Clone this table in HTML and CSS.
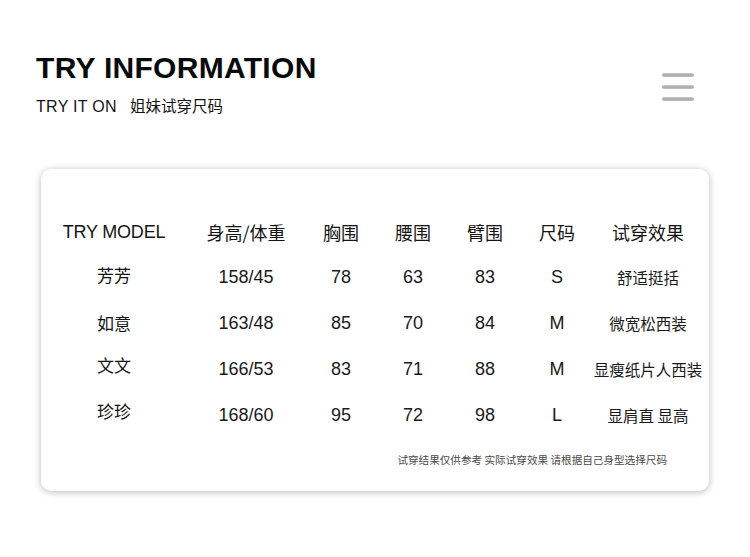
FILE: index.html
```html
<!DOCTYPE html>
<html lang="zh-CN">
<head>
<meta charset="utf-8">
<title>TRY INFORMATION</title>
<link rel="stylesheet" href="styles.css">
</head>
<body>
<header class="top">
  <div class="titles">
    <h1 class="title">TRY INFORMATION</h1>
    <p class="subtitle"><span class="sub-en">TRY IT ON</span><span class="sub-cn">姐妹试穿尺码</span></p>
  </div>
  <div class="menu" aria-label="menu">
    <span class="bar"></span>
    <span class="bar"></span>
    <span class="bar"></span>
  </div>
</header>

<section class="card">
  <div class="table">
    <div class="cell head en">TRY MODEL</div>
    <div class="cell head">身高/体重</div>
    <div class="cell head">胸围</div>
    <div class="cell head">腰围</div>
    <div class="cell head">臂围</div>
    <div class="cell head">尺码</div>
    <div class="cell head">试穿效果</div>

    <div class="cell name up2">芳芳</div>
    <div class="cell num">158/45</div>
    <div class="cell num">78</div>
    <div class="cell num">63</div>
    <div class="cell num">83</div>
    <div class="cell num">S</div>
    <div class="cell effect">舒适挺括</div>

    <div class="cell name">如意</div>
    <div class="cell num">163/48</div>
    <div class="cell num">85</div>
    <div class="cell num">70</div>
    <div class="cell num">84</div>
    <div class="cell num">M</div>
    <div class="cell effect">微宽松西装</div>

    <div class="cell name up4">文文</div>
    <div class="cell num">166/53</div>
    <div class="cell num">83</div>
    <div class="cell num">71</div>
    <div class="cell num">88</div>
    <div class="cell num">M</div>
    <div class="cell effect">显瘦纸片人西装</div>

    <div class="cell name up4">珍珍</div>
    <div class="cell num">168/60</div>
    <div class="cell num">95</div>
    <div class="cell num">72</div>
    <div class="cell num">98</div>
    <div class="cell num">L</div>
    <div class="cell effect">显肩直 显高</div>
  </div>
  <p class="note">试穿结果仅供参考 实际试穿效果 请根据自己身型选择尺码</p>
</section>
</body>
</html>
```

FILE: styles.css
```css
* { box-sizing: border-box; }

html, body {
  margin: 0;
  padding: 0;
  background: #ffffff;
}

body {
  width: 750px;
  height: 557px;
  overflow: hidden;
  font-family: "Liberation Sans", Arial, "Noto Sans CJK SC", sans-serif;
  color: #111;
}

.top {
  display: flex;
  justify-content: space-between;
  align-items: flex-start;
  padding: 53px 56px 0 36px;
}

.title {
  margin: 0;
  font-size: 30px;
  line-height: 30px;
  font-weight: 700;
  letter-spacing: 0.3px;
  color: #0a0a0a;
}

.subtitle {
  margin: 14px 0 0;
  display: flex;
  align-items: baseline;
  font-size: 16px;
  line-height: 16px;
  color: #141414;
}

.sub-en {
  letter-spacing: 0.3px;
}

.sub-cn {
  margin-left: 13px;
  font-family: "Noto Sans CJK SC", sans-serif;
  font-size: 15.5px;
}

.menu {
  margin-top: 20px;
  display: flex;
  flex-direction: column;
  gap: 8px;
}

.bar {
  display: block;
  width: 32px;
  height: 4px;
  border-radius: 2px;
  background: linear-gradient(180deg, #d0d0d0 0%, #a6a6a6 50%, #c4c4c4 100%);
}

.card {
  margin: 54px 0 0 41px;
  width: 668px;
  height: 322px;
  background: #fff;
  border-radius: 10px;
  box-shadow: 0 1px 7px rgba(0, 0, 0, 0.28);
  padding-top: 41px;
  display: flex;
  flex-direction: column;
}

.table {
  display: grid;
  grid-template-columns: 146px 118px 72px 72px 72px 72px 110px;
  grid-template-rows: 44px repeat(4, 46px);
  align-items: center;
}

.cell {
  text-align: center;
  white-space: nowrap;
  color: #151515;
}

.head {
  font-family: "Noto Sans CJK SC", sans-serif;
  font-size: 18px;
  line-height: 22px;
}

.head.en {
  font-family: "Liberation Sans", Arial, sans-serif;
  letter-spacing: -0.2px;
}

.name {
  font-family: "Noto Sans CJK SC", sans-serif;
  font-size: 17px;
  line-height: 22px;
}

.up2 { margin-bottom: 4px; }
.up4 { margin-bottom: 8px; }

.num {
  font-family: "Liberation Sans", Arial, sans-serif;
  font-size: 18px;
  line-height: 22px;
  color: #1a1a1a;
}

.effect {
  font-family: "Noto Sans CJK SC", sans-serif;
  font-size: 15.5px;
  line-height: 22px;
  color: #1a1a1a;
}

.note {
  margin: 15px 42px 0 0;
  text-align: right;
  font-family: "Noto Sans CJK SC", sans-serif;
  font-size: 10.6px;
  line-height: 14px;
  color: #4a4a4a;
}
```
